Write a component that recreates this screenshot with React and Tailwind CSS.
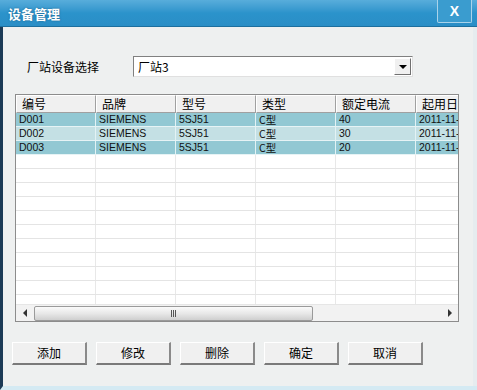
import React from "react";

const cjk = { fontFamily: '"Noto Sans CJK SC", "Liberation Sans", sans-serif' };
const lat = { fontFamily: '"Liberation Sans", "Noto Sans CJK SC", sans-serif' };

const cols = ["编号", "品牌", "型号", "类型", "额定电流", "起用日期"];
const rows = [
  ["D001", "SIEMENS", "5SJ51", "C型", "40", "2011-11-1"],
  ["D002", "SIEMENS", "5SJ51", "C型", "30", "2011-11-1"],
  ["D003", "SIEMENS", "5SJ51", "C型", "20", "2011-11-1"],
];

function Btn({ children }) {
  return (
    <div className="w-[75px] h-[23px] bg-[#f0f0f0] border-t border-l border-t-white border-l-white border-r-2 border-b-2 border-r-[#8a8a8a] border-b-[#7a7a7a] flex items-center justify-center text-[12px] text-black" style={cjk}>
      {children}
    </div>
  );
}

export default function App() {
  return (
    <div className="w-[477px] h-[390px] overflow-hidden flex flex-col bg-[#eef0f0]">
      {/* title bar */}
      <div className="h-[27px] shrink-0 flex items-start bg-gradient-to-b from-[#58addb] via-[#2b93cb] to-[#2a8ec6] border-b border-[#1d6f9e]">
        <div className="pl-[8px] pt-[5px] text-[13px] font-bold text-white leading-[17px] [text-shadow:0_0_2px_#1a5f88]" style={cjk}>设备管理</div>
        <div className="ml-auto mr-[5px] w-[35px] h-[23px] border border-[#a9d3ea] border-t-0 rounded-b-[2px] flex items-center justify-center text-white font-bold text-[14px] bg-[#3a9ccf]" style={lat}>X</div>
      </div>
      {/* body */}
      <div className="flex-1 flex border-l-[3px] border-l-[#1b3a56] border-b-[4px] border-b-[#d4eaf3]">
        <div className="flex-1 flex flex-col pl-[12px] pr-[14px]">
          {/* combo row */}
          <div className="flex items-center h-[21px] mt-[29px]">
            <div className="w-[118px] pl-[12px] text-[12px] text-black" style={cjk}>厂站设备选择</div>
            <div className="w-[280px] h-[21px] bg-white border-t border-l border-t-[#808080] border-l-[#808080] border-r border-b border-r-[#e0e0e0] border-b-[#e0e0e0] flex items-center">
              <div className="flex-1 pl-[4px] text-[12px] text-black leading-[16px]" style={cjk}>厂站3</div>
              <div className="w-[17px] h-[17px] mr-[1px] bg-[#f0f0f0] border-t border-l border-t-white border-l-white border-r border-b border-r-[#707070] border-b-[#707070] flex items-center justify-center">
                <div className="w-0 h-0 border-l-[4px] border-r-[4px] border-t-[4px] border-l-transparent border-r-transparent border-t-black mt-[1px]" />
              </div>
            </div>
          </div>
          {/* table */}
          <div className="mt-[17px] w-[444px] h-[228px] border border-[#8c8c8c] bg-white flex flex-col overflow-hidden">
            <div className="flex h-[18px] shrink-0 bg-[#f0f0f0]">
              {cols.map((c, i) => (
                <div key={i} className="w-[80px] shrink-0 h-[18px] border-r border-b border-r-[#a0a0a0] border-b-[#a0a0a0] border-t border-l border-t-white border-l-white pl-[5px] text-[12px] text-black leading-[15px] overflow-hidden whitespace-nowrap" style={cjk}>{c}</div>
              ))}
            </div>
            {rows.map((r, ri) => (
              <div key={ri} className={"flex h-[14px] shrink-0 border-b border-[#e6f3f5] " + (ri === 1 ? "bg-[#c4e0e4]" : "bg-[#92c8d3]")}>
                {r.map((v, ci) => (
                  <div key={ci} className="w-[80px] shrink-0 border-r border-[#e3f2f4] pl-[3px] text-[10.5px] text-[#111] leading-[13px] whitespace-nowrap overflow-hidden" style={v.includes("型") ? cjk : lat}>{v}</div>
                ))}
              </div>
            ))}
            <div className="flex-1 overflow-hidden">
              {Array.from({ length: 12 }).map((_, ri) => (
                <div key={ri} className="flex h-[14px] border-b border-[#e4e4e4]">
                  {cols.map((_, ci) => (
                    <div key={ci} className="w-[80px] shrink-0 border-r border-[#e8e8e8]" />
                  ))}
                </div>
              ))}
            </div>
            {/* scrollbar */}
            <div className="h-[17px] shrink-0 flex items-center bg-[#f2f2f2] border-t border-[#e6e6e6]">
              <div className="w-[17px] h-[15px] flex items-center justify-center">
                <div className="w-0 h-0 border-t-[4px] border-b-[4px] border-r-[4px] border-t-transparent border-b-transparent border-r-[#333]" />
              </div>
              <div className="w-[279px] h-[15px] ml-[1px] rounded-[2px] border border-[#9a9a9a] bg-gradient-to-b from-[#fafafa] via-[#e8e8e8] to-[#cfcfcf] flex items-center justify-center">
                <div className="flex gap-[1px]">
                  <div className="w-[1px] h-[7px] bg-[#555]" />
                  <div className="w-[1px] h-[7px] bg-[#555]" />
                  <div className="w-[1px] h-[7px] bg-[#555]" />
                </div>
              </div>
              <div className="flex-1" />
              <div className="w-[17px] h-[15px] flex items-center justify-center">
                <div className="w-0 h-0 border-t-[4px] border-b-[4px] border-l-[4px] border-t-transparent border-b-transparent border-l-[#333]" />
              </div>
            </div>
          </div>
          {/* buttons */}
          <div className="mt-[20px] flex gap-[9px] -ml-[3px]">
            <Btn>添加</Btn>
            <Btn>修改</Btn>
            <Btn>删除</Btn>
            <Btn>确定</Btn>
            <Btn>取消</Btn>
          </div>
        </div>
        <div className="w-[4px] bg-[#e6ecef]" />
      </div>
    </div>
  );
}
